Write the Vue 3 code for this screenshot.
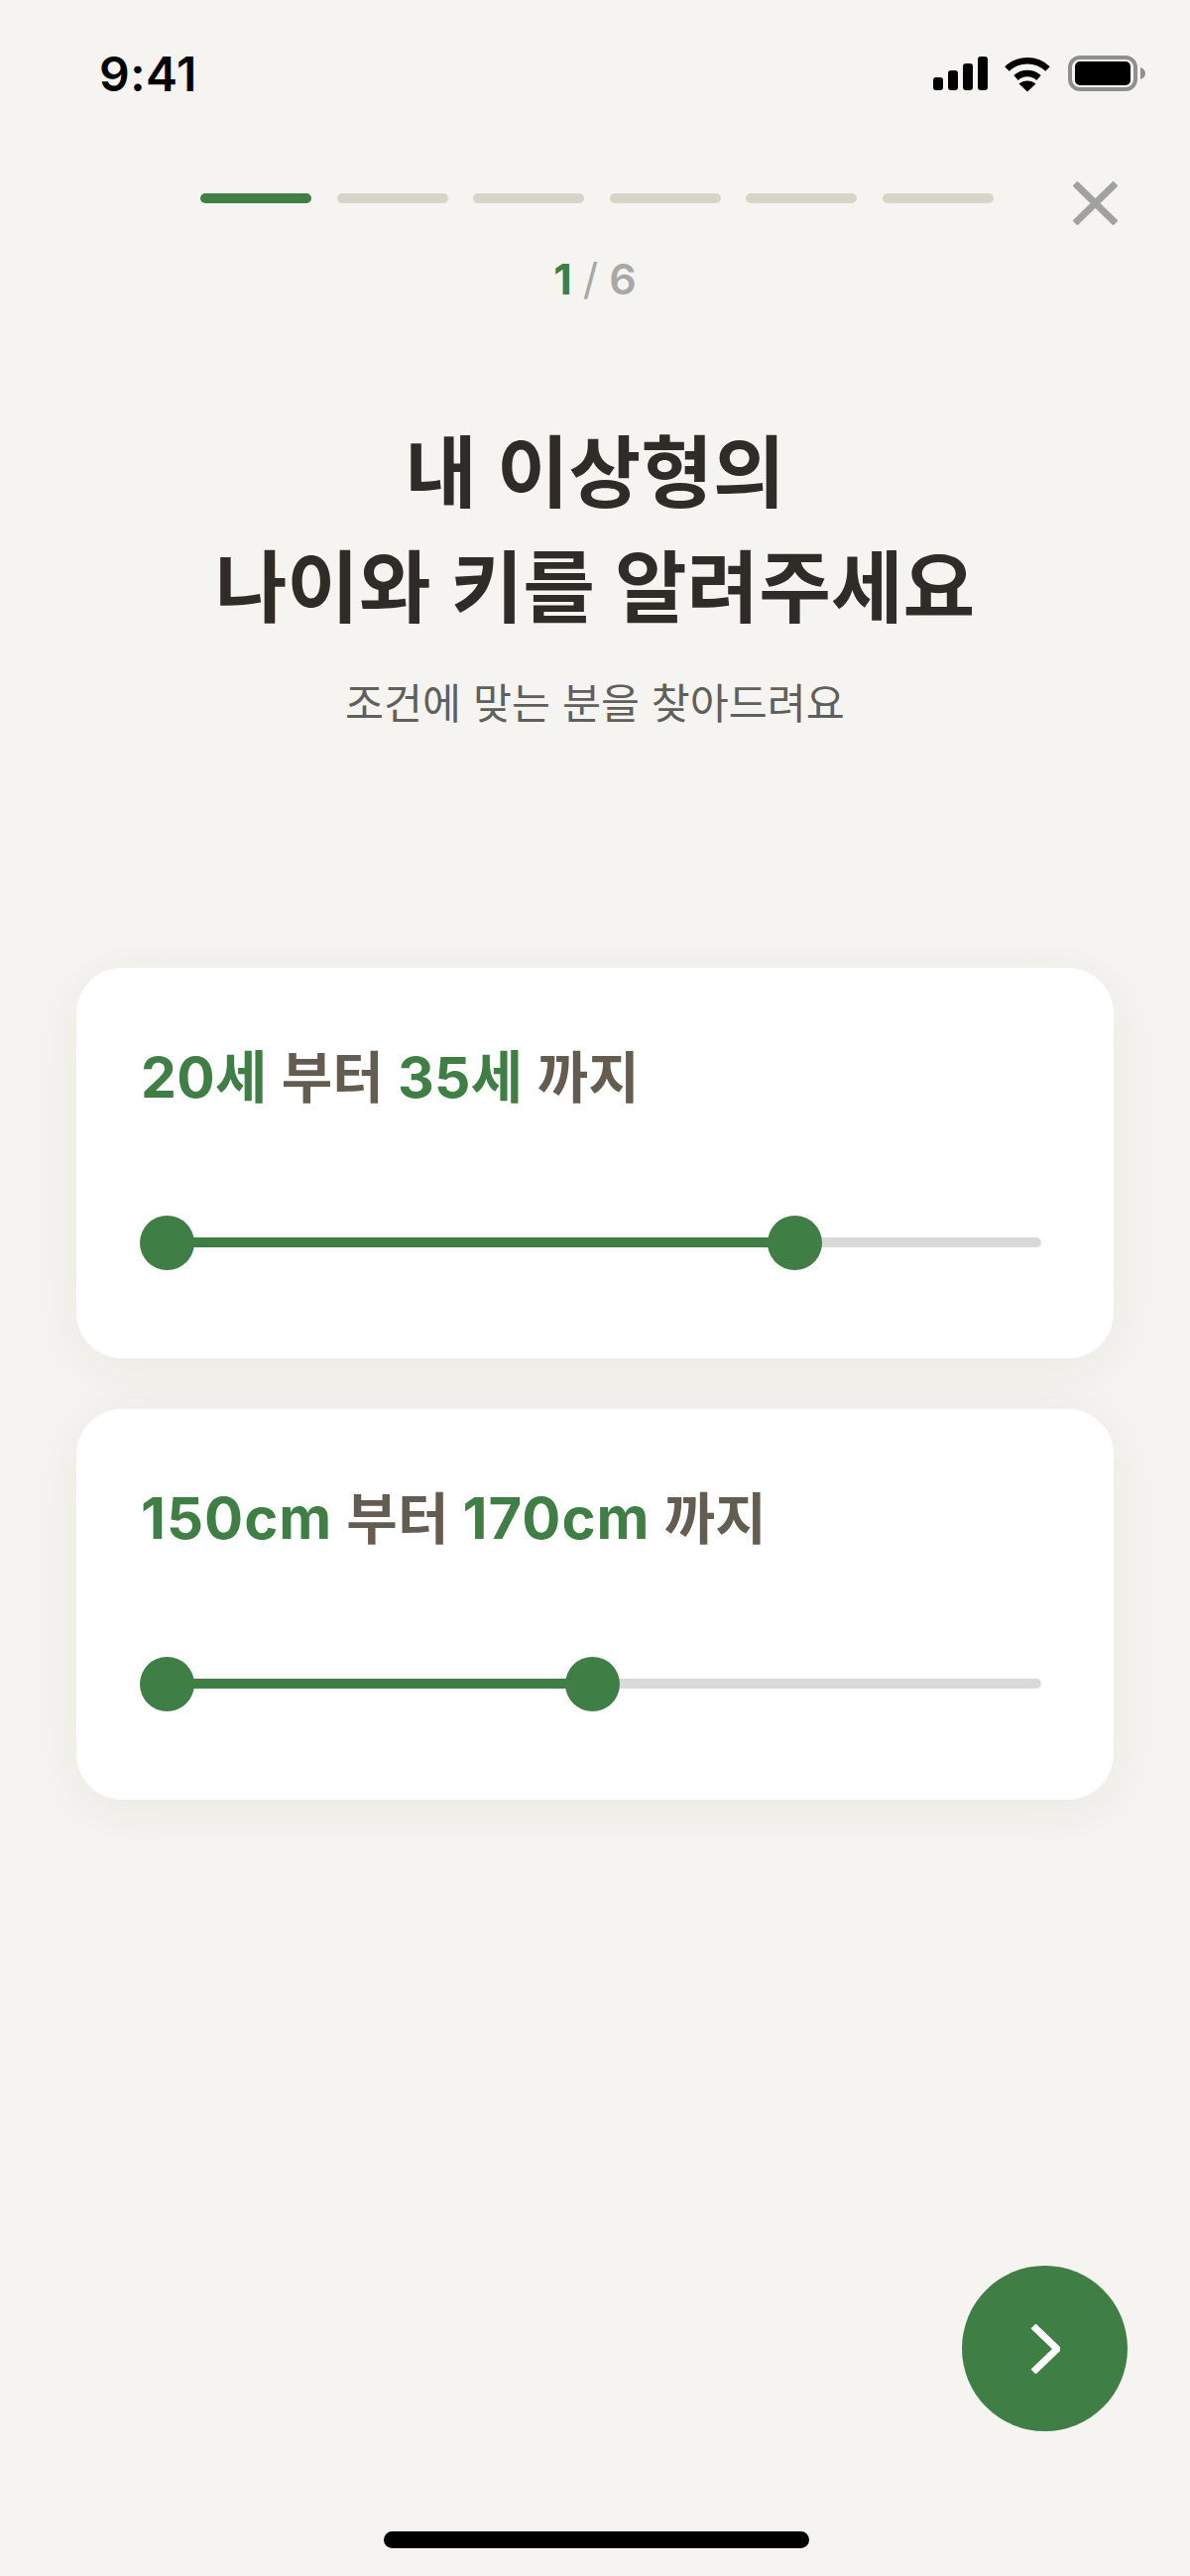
<script setup>
const steps = [true, false, false, false, false, false]

const ranges = [
  { id: 'age', from: '20세', to: '35세', start: 26.5, end: 659 },
  { id: 'height', from: '150cm', to: '170cm', start: 26.5, end: 455 }
]
</script>

<template>
  <div class="page">
    <div class="status">
      <span class="time">9:41</span>
      <div class="status-icons">
        <svg class="signal" width="55" height="34" viewBox="0 0 55 34">
          <rect x="0" y="21" width="10" height="13" rx="3" />
          <rect x="15" y="14" width="10" height="20" rx="3" />
          <rect x="30" y="7" width="10" height="27" rx="3" />
          <rect x="45" y="0" width="10" height="34" rx="3" />
        </svg>
        <svg class="wifi" width="48" height="37" viewBox="0 0 48 37">
          <path d="M3.5 13.5C15 2.5 33 2.5 44.5 13.5" />
          <path d="M12.5 22.5C19 16.5 29 16.5 35.5 22.5" />
          <path class="wifi-dot" d="M24 36.5L15.5 28.5C20 24.5 28 24.5 32.5 28.5Z" />
        </svg>
        <svg class="battery" width="78" height="36" viewBox="0 0 78 36">
          <rect x="2" y="2" width="66" height="32" rx="10" class="battery-case" />
          <rect x="7" y="6" width="56" height="24" rx="5" />
          <path class="battery-tip" d="M73 12C76 13 78 15 78 18C78 21 76 23 73 24Z" />
        </svg>
      </div>
    </div>

    <div class="progress">
      <div class="steps">
        <span
          v-for="(active, i) in steps"
          :key="i"
          class="step"
          :class="{ active }"
        ></span>
      </div>
      <svg class="close" width="45" height="44" viewBox="0 0 45 44">
        <path d="M2 2L43 42M43 2L2 42" />
      </svg>
    </div>

    <div class="counter"><b>1</b><i>/</i><em>6</em></div>

    <h1 class="title">내 이상형의<br />나이와 키를 알려주세요</h1>
    <p class="subtitle">조건에 맞는 분을 찾아드려요</p>

    <div class="cards">
      <section v-for="r in ranges" :key="r.id" class="card">
        <div class="label">
          <span class="val">{{ r.from }}</span> 부터 <span class="val">{{ r.to }}</span> 까지
        </div>
        <div class="slider">
          <div class="fill" :style="{ left: r.start + 'px', width: (r.end - r.start) + 'px' }"></div>
          <span class="thumb" :style="{ left: r.start + 'px' }"></span>
          <span class="thumb" :style="{ left: r.end + 'px' }"></span>
        </div>
      </section>
    </div>

    <button class="next">
      <svg width="30" height="50" viewBox="0 0 30 50">
        <path d="M3 2L27 25L3 48" />
      </svg>
    </button>

    <div class="home"></div>
  </div>
</template>

<style>
html,
body {
  margin: 0;
  background: #f5f4f0;
}
</style>

<style scoped>
.page {
  position: relative;
  display: flex;
  flex-direction: column;
  width: 1200px;
  height: 2598px;
  overflow: hidden;
  background: #f5f4f0;
  font-family: Inter, "Noto Sans CJK KR", sans-serif;
}

.status {
  display: flex;
  justify-content: space-between;
  align-items: center;
  height: 52px;
  margin-top: 48px;
  padding: 0 45px 0 100px;
}
.time {
  font-size: 48px;
  font-weight: 600;
  color: #000;
  letter-spacing: 0.5px;
}
.status-icons {
  display: flex;
  align-items: center;
}
.signal {
  fill: #000;
}
.wifi {
  margin-left: 16px;
  fill: none;
  stroke: #000;
  stroke-width: 6.5;
}
.wifi-dot {
  fill: #000;
  stroke: none;
}
.battery {
  margin-left: 17px;
  fill: #000;
}
.battery-case {
  fill: none;
  stroke: #8f8f8d;
  stroke-width: 4;
}
.battery-tip {
  fill: #8f8f8d;
}

.progress {
  display: flex;
  align-items: flex-start;
  margin-top: 83px;
  padding-left: 202px;
  height: 62px;
}
.steps {
  display: flex;
  gap: 25.6px;
  margin-top: 12px;
}
.step {
  width: 112px;
  height: 10px;
  border-radius: 5px;
  background: #d6d5c9;
}
.step.active {
  background: #3f7f45;
}
.close {
  margin: 0 0 0 80px;
  fill: none;
  stroke: #a1a19d;
  stroke-width: 7;
}

.counter {
  margin-top: 11px;
  font-size: 43px;
  line-height: 50px;
  font-weight: 600;
  text-align: center;
  color: #a8a8a6;
}
.counter b {
  font-weight: 700;
  color: #3f7f45;
}
.counter i {
  margin: 0 11px;
  font-style: normal;
  font-weight: 400;
}
.counter em {
  font-style: normal;
}

.title {
  margin: 113px 0 0;
  font-size: 79px;
  line-height: 116px;
  font-weight: 600;
  text-align: center;
  color: #2f2c28;
}
.subtitle {
  margin: 31px 0 0;
  font-size: 42.4px;
  line-height: 56px;
  font-weight: 400;
  text-align: center;
  color: #5f5f5b;
}

.cards {
  display: flex;
  flex-direction: column;
  gap: 51px;
  margin: 238px 77px 0;
}
.card {
  height: 394px;
  box-sizing: border-box;
  padding: 76px 73px 0 65px;
  border-radius: 46px;
  background: #fff;
  box-shadow: 0 10px 60px rgba(60, 55, 40, 0.06);
}
.label {
  height: 70px;
  font-size: 56px;
  line-height: 70px;
  font-weight: 600;
  color: #655c51;
  white-space: nowrap;
}
.val {
  font-size: 58px;
  line-height: 1;
  letter-spacing: 1px;
  font-weight: 700;
  color: #3f7f45;
}
.card:first-child .val {
  font-size: 57px;
  letter-spacing: 0.3px;
}
.slider {
  position: relative;
  height: 10px;
  margin-top: 126px;
  border-radius: 5px;
  background: #d9d9d9;
}
.fill {
  position: absolute;
  top: 0;
  height: 10px;
  background: #3f7f45;
}
.thumb {
  position: absolute;
  top: -22.5px;
  width: 55px;
  height: 55px;
  margin-left: -27.5px;
  border-radius: 50%;
  background: #3f7f45;
}

.next {
  position: absolute;
  left: 970px;
  top: 2285px;
  display: flex;
  align-items: center;
  justify-content: center;
  width: 167px;
  height: 167px;
  padding: 0;
  border: none;
  border-radius: 50%;
  background: #3f7f45;
}
.next svg {
  fill: none;
  stroke: #fff;
  stroke-width: 7;
}

.home {
  position: absolute;
  left: 387px;
  top: 2553px;
  width: 429px;
  height: 17px;
  border-radius: 9px;
  background: #000;
}
</style>
